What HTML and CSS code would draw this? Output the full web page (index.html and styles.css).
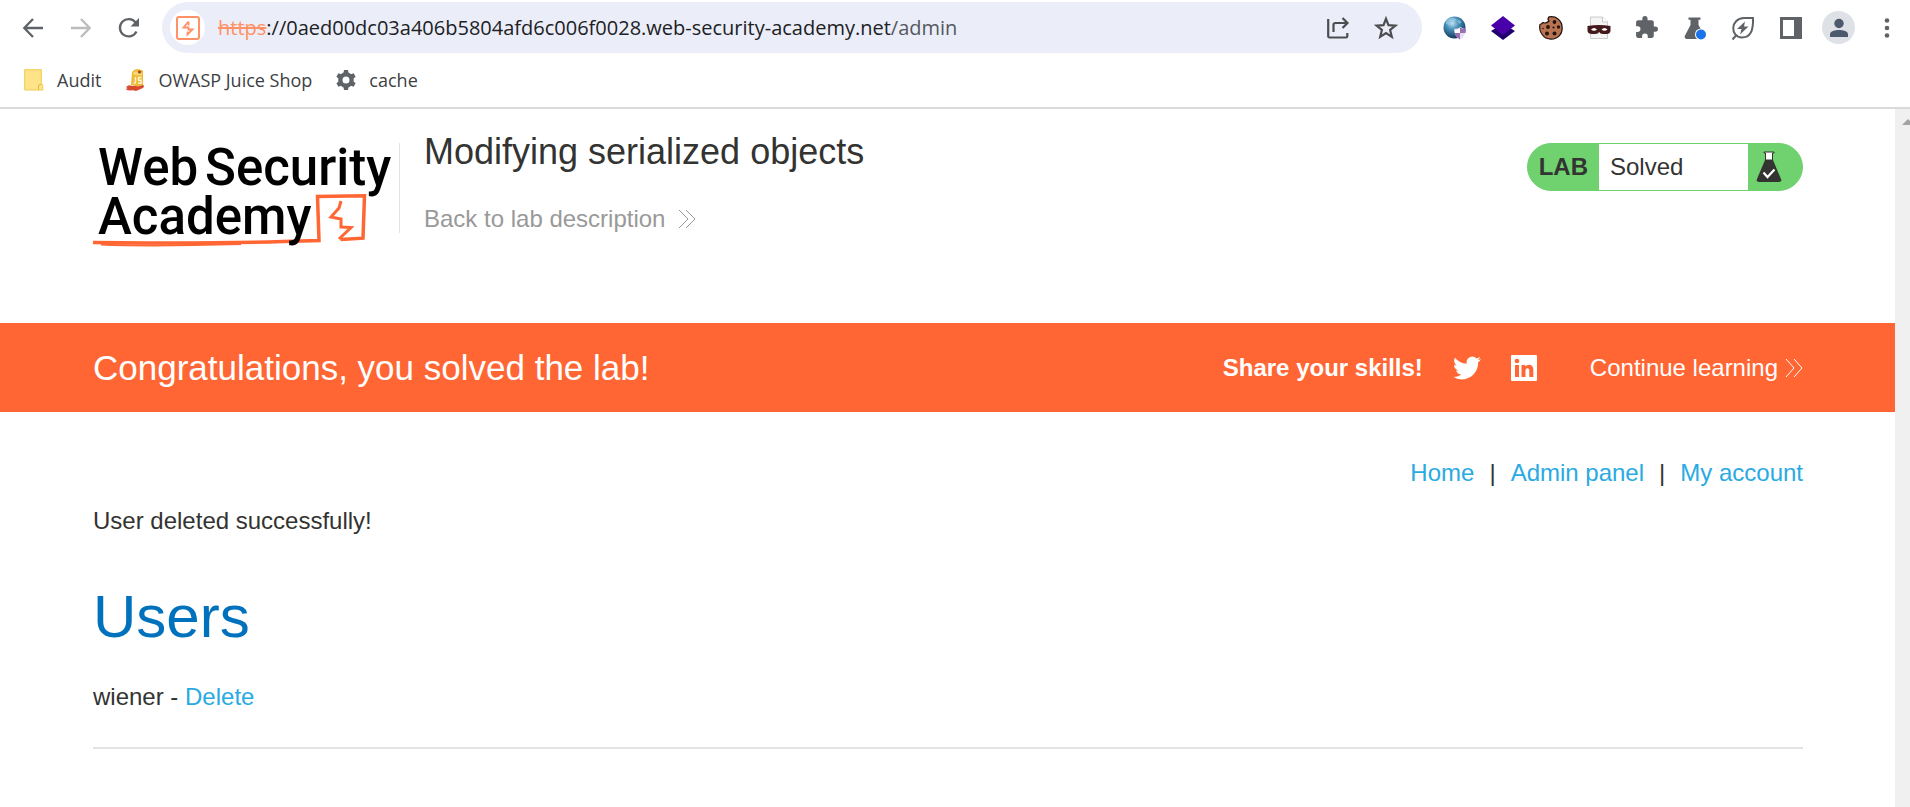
FILE: index.html
```html
<!DOCTYPE html>
<html lang="en">
<head>
<meta charset="utf-8">
<title>Modifying serialized objects</title>
<link rel="stylesheet" href="styles.css">
</head>
<body>
<div class="browser">
  <div class="toolbar">
    <div class="nav-buttons">
      <button class="icon-btn" aria-label="Back"><svg width="22" height="22" viewBox="0 0 22 22" fill="none" stroke="#5f6368" stroke-width="2.3"><path d="M21 11H3M11 2L2.300 11l8.700 9"/></svg></button>
      <button class="icon-btn" aria-label="Forward" disabled><svg width="22" height="22" viewBox="0 0 22 22" fill="none" stroke="#babcbe" stroke-width="2.300"><path d="M1 11h18M11 2l8.700 9L11 20"/></svg></button>
      <button class="icon-btn" aria-label="Reload"><svg width="22" height="22" viewBox="0 0 22 22"><path d="M18.500 14.500A8.700 8.700 0 1 1 17.600 5.500" fill="none" stroke="#5f6368" stroke-width="2.300"/><path d="M21 1v8.500h-8.500z" fill="#5f6368"/></svg></button>
    </div>
    <form class="address">
      <span class="site-icon"><svg width="24" height="24" viewBox="0 0 24 24" fill="none" stroke="#ff9166" stroke-width="2"><rect x="1" y="1" width="22" height="22" rx="2"/><path d="M12.500 5.500L7.500 11.500h5v2h4L11.500 18.500v-3M12.500 5.500v4" stroke-width="1.800"/></svg></span>
      <label class="scheme" for="url">https</label>
      <input class="url" id="url" type="text" value="://0aed00dc03a406b5804afd6c006f0028.web-security-academy.net" spellcheck="false">
      <span class="path">/admin</span>
      <span class="address-actions">
        <button type="button" class="icon-btn" aria-label="Share"><svg width="22" height="22" viewBox="0 0 22 22" fill="none" stroke="#4d4d4f" stroke-width="2.200"><path d="M1.200 2v17.200q0 1.300 1.300 1.300h16.500q1.300 0 1.300-1.300V16M6.500 15V8q0-2 2-2h12M15.500 1l5 5-5 5"/></svg></button>
        <button type="button" class="icon-btn" aria-label="Bookmark"><svg width="24" height="24" viewBox="0 0 24 24" fill="none" stroke="#4d4d4f" stroke-width="2.200"><path d="M12 2.800l2.500 6.400 6.900.5-5.300 4.300 1.700 6.800L12 17l-5.800 3.800 1.700-6.800-5.300-4.300 6.900-.5z"/></svg></button>
      </span>
    </form>
    <div class="extensions">
      <button class="icon-btn" aria-label="Proxy"><svg width="24" height="24" viewBox="0 0 24 24"><defs><radialGradient id="globe" cx=".4" cy=".3" r=".7"><stop offset="0" stop-color="#c3e2f1"/><stop offset=".4" stop-color="#4a93bd"/><stop offset="1" stop-color="#113a5c"/></radialGradient></defs><circle cx="11.500" cy="11.500" r="11" fill="url(#globe)"/><path d="M3 5q3-4 8-3l3 2-5 2-2 3-4-1M14 3l5 3-3 2z" fill="#9fd0e8" opacity=".6"/><path d="M11 13q4 0 6.500-2 2.500 2 5.500 2 0 7-6 10.500Q11 20 11 13z" fill="#e6dfee"/><path d="M17 11.500q2.500 1.500 6 1.500 0 2-.5 4H17zM11.500 17H17v6.500q-4-2-5.500-6.500z" fill="#9a6fb4"/><path d="M12 14q3 0 5-1.500V17h-5z" fill="#fff"/></svg></button>
      <button class="icon-btn" aria-label="Layers"><svg width="24" height="24" viewBox="0 0 24 24"><path d="M0 15L5 12h14l5 3-12 9z" fill="#20006f"/><path d="M12 0l12 9.500-12 9.500L0 9.500z" fill="#4a00a8"/></svg></button>
      <button class="icon-btn" aria-label="Cookies"><svg width="24" height="24" viewBox="0 0 24 24"><path d="M10 .9Q8 3 10 5 7 8 4 6.500 2.500 8 1 8.500C-.5 15 4 23.200 12 23.200c7 0 11.200-5 11.200-11.200C23.200 4 16.500-.5 10 .9z" fill="#b87350" stroke="#24140e" stroke-width="1.200"/><g fill="#27130e"><circle cx="15.500" cy="6" r="1.900"/><circle cx="9" cy="11" r="1.900"/><circle cx="14.500" cy="11.500" r="1.100"/><circle cx="19.500" cy="11" r="1.700"/><circle cx="8" cy="17.500" r="2"/><circle cx="15.500" cy="17.500" r="2"/><circle cx="4" cy="12.500" r=".8"/></g></svg></button>
      <button class="icon-btn" aria-label="Masked file"><svg width="24" height="24" viewBox="0 0 24 24"><path d="M3.500 1h12l5 5v16.500h-17z" fill="#f4f4f4" stroke="#ccc"/><path d="M15.500 1v5h5" fill="#fff" stroke="#c8c8c8"/><path d="M.5 10q11.500-2 23 0v5q-.5 3-4 3h-3.500q-3 0-3.800-2-1 2-4 2H5q-4 0-4.500-3z" fill="#43191b"/><path d="M4 13.500q3-3 6 0-3 2.500-6 0zM14.500 13.500q3-3 6 0-3 2.500-6 0z" fill="#fff"/></svg></button>
      <button class="icon-btn" aria-label="Extensions"><svg width="25" height="25" viewBox="0 0 24 24"><path fill="#5f6368" d="M20.500 11H19V7c0-1.100-.9-2-2-2h-4V3.500a2.500 2.500 0 0 0-5 0V5H4c-1.100 0-2 .9-2 2v3.800h1.500a2.700 2.700 0 0 1 0 5.400H2V20c0 1.100.9 2 2 2h3.800v-1.500a2.700 2.700 0 0 1 5.400 0V22H17c1.100 0 2-.9 2-2v-4h1.500a2.500 2.500 0 0 0 0-5z"/></svg></button>
      <button class="icon-btn" aria-label="Experiments"><svg width="24" height="24" viewBox="0 0 24 24"><path d="M5.500 1.500h12v2.300h-2V9l6 10.500q1 3-1.500 3.500H3.500Q.8 22 2 19.500L7.500 9V3.800h-2z" fill="#5f6368"/><circle cx="18" cy="18.500" r="6" fill="#fff"/><circle cx="18" cy="18.500" r="5" fill="#1a73e8"/></svg></button>
      <button class="icon-btn" aria-label="Energy saver"><svg width="24" height="24" viewBox="0 0 24 24" fill="none" stroke="#5f6368" stroke-width="2"><path d="M22 2H13C-1 2.500-1 21 11 21.500c8 0 11.500-6 11-19.500zM1.500 23.500l4-4.500"/><path d="M14 5.500l-8 7.500h4.500L9 18.500l8.500-8H13z" fill="#5f6368" stroke="none"/></svg></button>
      <button class="icon-btn" aria-label="Side panel"><svg width="22" height="22" viewBox="0 0 22 22"><path fill="#5f6368" fill-rule="evenodd" d="M0 0h22v22H0zM3 3v16h11V3z"/></svg></button>
      <button class="icon-btn avatar" aria-label="Profile"><svg width="20" height="20" viewBox="0 0 20 20" fill="#4d5a6e"><circle cx="10" cy="5.500" r="4.700"/><path d="M1 19v-2.500C1 13 6 12 10 12s9 1 9 4.500V19z"/></svg></button>
      <button class="icon-btn" aria-label="Menu"><svg width="6" height="22" viewBox="0 0 6 22" fill="#5f6368"><circle cx="3" cy="3.500" r="2.300"/><circle cx="3" cy="11" r="2.300"/><circle cx="3" cy="18.500" r="2.300"/></svg></button>
    </div>
  </div>
  <nav class="bookmarks" aria-label="Bookmarks">
    <a href="#audit"><svg width="20" height="22" viewBox="0 0 20 22"><path d="M.7.700h16.600v14q1.500.5 1.500 2V21H.7z" fill="#ffe388" stroke="#f0cb4e"/><path d="M14.500 20.500V17q0-1.500 1.500-1.500h1.300" fill="none" stroke="#dfb63e"/></svg>Audit</a>
    <a href="#juice"><svg width="20" height="22" viewBox="0 0 20 22"><path d="M1 18q3-3 6-1l11-1q2 1 0 3l-7 3q-3-1-5-.5-4 0-5.500-1.500 2-.5 2-1z" fill="#d84b31"/><path d="M7 3q3-4 8-2.500l3 1V16l-5 1.500L6 16z" fill="#efba37"/><path d="M8 3.500q3-2 9 0v3L9 6z" fill="#f8d777"/><circle cx="14.500" cy="3" r="1.500" fill="#9d3b22"/><path d="M10.500 8v5q0 1.500-2 1M16.500 8.500h-3v2.700h2.500v3h-3" fill="none" stroke="#fff6d6" stroke-width="1.400"/></svg>OWASP Juice Shop</a>
    <a href="#cache"><svg width="20" height="20" viewBox="0 0 20 20"><g fill="#5f6368"><path fill-rule="evenodd" d="M10 2.200a7.800 7.800 0 1 0 0 15.600 7.800 7.800 0 0 0 0-15.600zm0 4.300a3.500 3.500 0 1 1 0 7 3.500 3.500 0 0 1 0-7z"/><path d="M8 0h4l.7 4H7.300zM8 20h4l.7-4H7.300zM.4 6.700l2-3.400 3.800 1.400-2.700 4.600zM19.600 13.300l-2 3.400-3.800-1.400 2.700-4.600zM.4 13.300l2 3.400 3.800-1.400-2.700-4.600zM19.600 6.700l-2-3.400-3.800 1.400 2.700 4.600z"/></g></svg>cache</a>
  </nav>
</div>
<div class="viewport">
  <div class="page">
    <header class="lab-header container">
      <a class="logo" href="#academy" aria-label="Web Security Academy">
        <svg width="306" height="104" viewBox="0 0 306 104">
          <g fill="none" stroke="#ff6633" stroke-width="3.500">
            <path d="M0 99.500l30 .3Q120 100.500 190 98.500L226 97.500 224.500 53.500l47-.8-1.500 42.500-22.500 1.300"/>
            <path d="M8 101.500q50 2 140-.5" stroke-width="2"/>
            <path d="M248 58l-2 7-8 9 10 2v8l10 .5-12 11.500" stroke-width="3"/>
          </g>
          <g class="logo-text"><text x="5" y="42">Web</text><text x="112" y="42">Security</text><text x="5" y="91">Academy</text></g>
        </svg>
      </a>
      <div class="title">
        <h2>Modifying serialized objects</h2>
        <a href="#lab">Back to lab description <svg width="18" height="20" viewBox="0 0 18 20" fill="none" stroke="currentColor"><path d="M1 1l9 9-9 9M8 1l9 9-9 9"/></svg></a>
      </div>
      <div class="lab-status">
        <strong>LAB</strong>
        <p>Solved</p>
        <span class="flask"><svg width="26" height="32" viewBox="0 0 26 32"><path d="M8 1v1h1.500v7h7V2H18V1z" fill="#fff" stroke="#333332"/><path d="M9 9h8l8 19q1 3-2 3H3q-3 0-2-3z" fill="#333332"/><path d="M7.500 21.500l4 4.500 7-7.500" fill="none" stroke="#fff" stroke-width="2.200"/></svg></span>
      </div>
    </header>
    <section class="banner container">
      <h4>Congratulations, you solved the lab!</h4>
      <div class="share">
        <strong>Share your skills!</strong>
        <a href="#twitter" aria-label="Twitter"><svg width="28" height="28" viewBox="0 0 24 24" fill="#fff"><path d="M23.950 4.570a10 10 0 0 1-2.820.77 4.960 4.960 0 0 0 2.160-2.720c-.95.550-2 .96-3.130 1.180a4.920 4.920 0 0 0-8.380 4.480C7.690 8.100 4.070 6.130 1.640 3.160a4.820 4.820 0 0 0-.67 2.480c0 1.710.87 3.210 2.190 4.100a4.900 4.900 0 0 1-2.230-.62v.06a4.920 4.920 0 0 0 3.950 4.830 5 5 0 0 1-2.210.08 4.940 4.940 0 0 0 4.600 3.420A9.870 9.870 0 0 1 0 19.540a14 14 0 0 0 7.550 2.210c9.050 0 14-7.500 14-13.980 0-.21 0-.42-.02-.63a9.940 9.940 0 0 0 2.420-2.570z"/></svg></a>
        <a href="#linkedin" aria-label="LinkedIn"><svg width="26" height="26" viewBox="0 0 26 26"><rect width="26" height="26" rx="1" fill="#fff"/><g fill="#ff6633"><circle cx="6" cy="6" r="2.300"/><path d="M4 10h4v12H4zM10.500 10h3.800v1.700c2-3 8-3 8 3V22h-4v-6.500c0-3-3.800-3-3.800 0V22h-4z"/></g></svg></a>
      </div>
      <a class="continue" href="#continue">Continue learning <svg width="18" height="20" viewBox="0 0 18 20" fill="none" stroke="currentColor"><path d="M1 1l8 9-8 9M9 1l8 9-8 9"/></svg></a>
    </section>
    <main class="content container">
      <nav class="account-links"><a href="#home">Home</a><span>|</span><a href="#admin">Admin panel</a><span>|</span><a href="#account">My account</a></nav>
      <p class="message">User deleted successfully!</p>
      <h1>Users</h1>
      <p class="user">wiener - <a href="#delete">Delete</a></p>
      <hr>
    </main>
  </div>
  <div class="scrollbar"><svg width="15" height="8" viewBox="0 0 15 8"><path d="M7 6l6-6 2 2v4z" fill="#a3a3a3"/></svg></div>
</div>
</body>
</html>
```
FILE: styles.css
```css
* { box-sizing: border-box; }
html, body { height: 100%; }
body {
  margin: 0;
  display: flex;
  flex-direction: column;
  overflow: hidden;
  background: #fff;
  color: #333332;
  font: 24px/28px "Liberation Sans", Arial, sans-serif;
}
h1, h2, h4, p { margin: 0; font-weight: 400; }
a { color: #29aae3; text-decoration: none; }
svg { display: block; flex: none; overflow: visible; }

.browser {
  border-bottom: 2px solid #dadada;
  font-family: "Open Sans", "Noto Sans", sans-serif;
}
.toolbar { display: flex; align-items: center; padding: 2px 0 0 9px; }
.icon-btn {
  display: flex;
  align-items: center;
  justify-content: center;
  width: 48px;
  height: 48px;
  padding: 0;
  border: 0;
  background: none;
}
.nav-buttons { display: flex; margin-right: 9px; }
.address {
  flex: 1;
  display: flex;
  align-items: center;
  height: 51px;
  padding: 0 12px 0 8px;
  border-radius: 26px;
  background: #ebeef8;
  font-size: 20px;
}
.site-icon {
  display: flex;
  align-items: center;
  justify-content: center;
  width: 35px;
  height: 35px;
  margin-right: 13px;
  border-radius: 50%;
  background: #fff;
}
.scheme { color: #ff9166; text-decoration: line-through; }
.url {
  field-sizing: content;
  padding: 0;
  border: 0;
  outline: 0;
  background: none;
  color: #202124;
  font: inherit;
}
.path { color: #55585d; }
.address-actions { display: flex; margin-left: auto; }
.extensions { display: flex; align-items: center; gap: 15px; padding: 0 7px 0 16px; }
.extensions .icon-btn { width: 33px; }
.extensions .avatar { height: 33px; border-radius: 50%; background: #dee1e6; }
.bookmarks {
  display: flex;
  gap: 24px;
  height: 54px;
  padding: 0 24px;
  font-size: 18px;
}
.bookmarks a { display: flex; align-items: center; gap: 13px; color: #3c4043; }

.viewport { flex: 1; display: flex; min-height: 0; }
.page { flex: 1; overflow: hidden; }
.scrollbar { width: 15px; padding-top: 10px; background: #f0f0f0; }
.container { padding-left: 93px; padding-right: 92px; }

.lab-header { display: flex; align-items: flex-start; padding-top: 22px; padding-bottom: 76px; }
.logo { margin-top: 12px; }
.logo-text { fill: #000; font: 500 51px Roboto, sans-serif; }
.title {
  padding-left: 25px;
  background: linear-gradient(#e3e3e3, #e3e3e3) 0 12px / 1px 94px no-repeat;
}
.title h2 { margin-bottom: 32px; font-size: 36px; line-height: 42px; }
.title a { display: flex; align-items: center; gap: 13px; color: #999; }
.lab-status {
  display: flex;
  height: 48px;
  margin: 12px 0 0 auto;
  border: 1px solid #70d16f;
  border-radius: 24px;
  background: #70d16f;
  line-height: 46px;
  overflow: hidden;
}
.lab-status strong { padding: 0 11px; }
.lab-status p { width: 149px; padding-left: 11px; background: #fff; }
.flask { display: flex; align-items: center; padding: 0 20px 0 8px; }

.banner { display: flex; align-items: center; height: 89px; background: #f63; color: #fff; }
.banner h4 { font-size: 35px; line-height: 42px; }
.share { display: flex; align-items: center; gap: 30px; margin: 0 53px 0 auto; }
.continue { display: flex; align-items: center; gap: 7px; color: #fff; }

.content { padding-top: 47px; }
.account-links { display: flex; justify-content: flex-end; gap: 15px; margin-bottom: 20px; }
.message { margin-bottom: 46px; }
h1 { margin-bottom: 30px; color: #0071bc; font-size: 60px; line-height: 72px; }
.user { margin-bottom: 36px; }
hr { margin: 0; border: 0; border-top: 2px solid #e3e3e3; }
```
